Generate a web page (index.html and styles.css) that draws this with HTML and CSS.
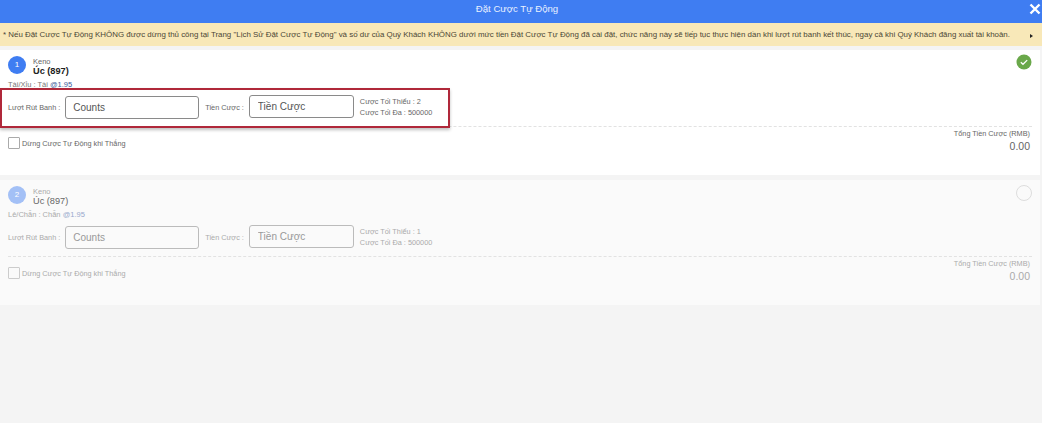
FILE: index.html
```html
<!DOCTYPE html>
<html lang="vi">

<head>
    <meta charset="UTF-8">
    <title>Đặt Cược Tự Động</title>
    <link rel="stylesheet" href="styles.css">
</head>

<body>
    <header class="topbar">
        <span>Đặt Cược Tự Động</span>
        <svg class="close" width="12" height="12" viewBox="0 0 12 12">
            <path d="M1.5 1.5l9 9M10.5 1.5l-9 9" stroke="#fff" stroke-width="2.4" fill="none" />
        </svg>
    </header>
    <div class="notice">
        <p>* Nếu Đặt Cược Tự Động KHÔNG được dừng thủ công tại Trang "Lịch Sử Đặt Cược Tự Động" và số dư của Quý Khách KHÔNG dưới mức tiền Đặt Cược Tự Động đã cài đặt, chức năng này sẽ tiếp tục thực hiện dần khi lượt rút banh kết thúc, ngay cả khi Quý Khách đăng xuất tài khoản.</p>
        <span class="arrow"></span>
    </div>

    <main class="list">
        <section class="card">
            <div class="cardhead">
                <span class="num">1</span>
                <div class="game">
                    <div class="gamecat">Keno</div>
                    <div class="gamename">Úc (897)</div>
                </div>
                <svg class="tick" width="16" height="16" viewBox="0 0 16 16">
                    <circle cx="8" cy="8" r="7.5" fill="#6aa84a" />
                    <path d="M4.8 8.2l2.2 2.1 4.2-4.2" stroke="#fff" stroke-width="1.3" fill="none" />
                </svg>
            </div>
            <div class="odds">Tài/Xỉu : Tài <b>@1.95</b></div>
            <div class="fields">
                <label class="fieldlabel">Lượt Rút Banh :</label>
                <input class="box countbox" type="text" placeholder="Counts">
                <label class="fieldlabel">Tiền Cược :</label>
                <input class="box moneybox" type="text" placeholder="Tiền Cược">
                <div class="limits">
                    <div>Cược Tối Thiểu : 2</div>
                    <div>Cược Tối Đa : 500000</div>
                </div>
            </div>
            <div class="cardfoot">
                <div class="stop"><span class="check"></span>Dừng Cược Tự Động khi Thắng</div>
                <div class="total">
                    <div class="totallabel">Tổng Tiền Cược (RMB)</div>
                    <div class="totalnum">0.00</div>
                </div>
            </div>
            <div class="redmark"></div>
        </section>

        <section class="card off">
            <div class="cardhead">
                <span class="num">2</span>
                <div class="game">
                    <div class="gamecat">Keno</div>
                    <div class="gamename">Úc (897)</div>
                </div>
                <span class="tickoff"></span>
            </div>
            <div class="odds">Lẻ/Chẵn : Chẵn <b>@1.95</b></div>
            <div class="fields">
                <label class="fieldlabel">Lượt Rút Banh :</label>
                <input class="box countbox" type="text" placeholder="Counts" disabled>
                <label class="fieldlabel">Tiền Cược :</label>
                <input class="box moneybox" type="text" placeholder="Tiền Cược" disabled>
                <div class="limits">
                    <div>Cược Tối Thiểu : 1</div>
                    <div>Cược Tối Đa : 500000</div>
                </div>
            </div>
            <div class="cardfoot">
                <div class="stop"><span class="check"></span>Dừng Cược Tự Động khi Thắng</div>
                <div class="total">
                    <div class="totallabel">Tổng Tiền Cược (RMB)</div>
                    <div class="totalnum">0.00</div>
                </div>
            </div>
        </section>
    </main>
</body>

</html>
```

FILE: styles.css
```css
html,
body {
    height: 100%;
}

body {
    margin: 0;
    overflow: hidden;
    background-color: #f4f4f4;
    font-family: 'Liberation Sans', sans-serif;
    color: #444;
}

.topbar {
    position: relative;
    height: 23px;
    padding-right: 8px;
    line-height: 18px;
    background-color: #3f7df2;
    color: #e8f0ff;
    font-size: 9.6px;
    text-align: center;
}

.close {
    position: absolute;
    top: 3px;
    right: 1px;
}

.notice {
    display: flex;
    align-items: center;
    justify-content: space-between;
    height: 23px;
    padding: 0 9px 0 3px;
    background-color: #f8e8b8;
    color: #4a4636;
    font-size: 7.92px;
}

.notice p {
    margin: 0;
    white-space: nowrap;
}

.arrow {
    width: 0;
    height: 0;
    margin-top: 3px;
    border-left: 3px solid #222;
    border-top: 2.5px solid transparent;
    border-bottom: 2.5px solid transparent;
}

.list {
    display: flex;
    flex-direction: column;
    gap: 5px;
    padding: 4px 2px 0 0;
}

.card {
    position: relative;
    height: 125px;
    padding: 0 8px;
    box-sizing: border-box;
    background-color: #fff;
}

.cardhead {
    display: flex;
    align-items: flex-start;
    height: 26px;
    padding-top: 5px;
}

.num {
    width: 18px;
    height: 18px;
    margin-top: 1px;
    border-radius: 50%;
    background-color: #3f7df2;
    color: #fff;
    font-size: 8px;
    line-height: 18px;
    text-align: center;
}

.game {
    margin-left: 7px;
    padding-top: 2px;
}

.gamecat {
    font-size: 7.5px;
    line-height: 9px;
    color: #666;
}

.gamename {
    font-size: 9.2px;
    line-height: 11px;
    font-weight: bold;
    color: #222;
}

.tick {
    margin-left: auto;
    margin-right: 0;
    margin-top: -1px;
}

.tickoff {
    width: 14px;
    height: 14px;
    margin-left: auto;
    margin-right: 0;
    margin-top: 0;
    border: 1px solid #ddd;
    border-radius: 50%;
}

.odds {
    margin-top: -1px;
    font-size: 7.5px;
    line-height: 9px;
    color: #777;
}

.odds b {
    color: #3a5a9a;
    font-weight: normal;
}

.fields {
    display: flex;
    align-items: center;
    height: 28px;
    margin-top: 4px;
}

.fieldlabel {
    font-size: 7.3px;
    color: #666;
    white-space: nowrap;
}

.box {
    height: 23px;
    padding: 0 7px;
    box-sizing: border-box;
    border: 1px solid #8a8a8a;
    border-radius: 3px;
    background-color: #fff;
    font-family: inherit;
    font-size: 10px;
}

.box::placeholder {
    color: #555;
    opacity: 1;
}

.countbox {
    width: 134px;
    margin: 0 6px 0 5px;
}

.moneybox {
    width: 105px;
    margin: -2px 6px 0 5px;
    padding-left: 8px;
}

.limits {
    font-size: 7.3px;
    line-height: 11px;
    color: #666;
    white-space: nowrap;
}

.cardfoot {
    display: flex;
    justify-content: space-between;
    margin-top: 5px;
    padding-top: 2px;
    border-top: 1px dashed #e2e2e2;
}

.stop {
    display: flex;
    align-items: center;
    height: 12px;
    margin-top: 8px;
    font-size: 7.3px;
    color: #666;
}

.check {
    width: 10px;
    height: 10px;
    margin-right: 2px;
    border: 1px solid #aaa;
    border-radius: 1px;
}

.total {
    margin-right: 2px;
    text-align: right;
}

.totallabel {
    font-size: 7.3px;
    line-height: 10px;
    color: #666;
}

.totalnum {
    font-size: 10.5px;
    line-height: 15px;
    color: #666;
}

.card.off {
    background-color: #fafafa;
}

.off .num {
    background-color: #a3c0f6;
}

.off .gamecat,
.off .odds,
.off .fieldlabel,
.off .limits,
.off .stop,
.off .totallabel,
.off .totalnum {
    color: #aaa;
}

.off .gamename {
    color: #666;
    font-weight: normal;
}

.off .odds b {
    color: #98a8cc;
}

.off .box {
    background-color: #fafafa;
    border-color: #bbb;
}

.off .box::placeholder {
    color: #999;
}

.off .check {
    border-color: #ccc;
}

.redmark {
    position: absolute;
    top: 38px;
    left: 0;
    width: 450px;
    height: 40px;
    box-sizing: border-box;
    border: 2px solid #b0283a;
    box-shadow: 0 2px 3px rgba(0, 0, 0, 0.25);
}
```
